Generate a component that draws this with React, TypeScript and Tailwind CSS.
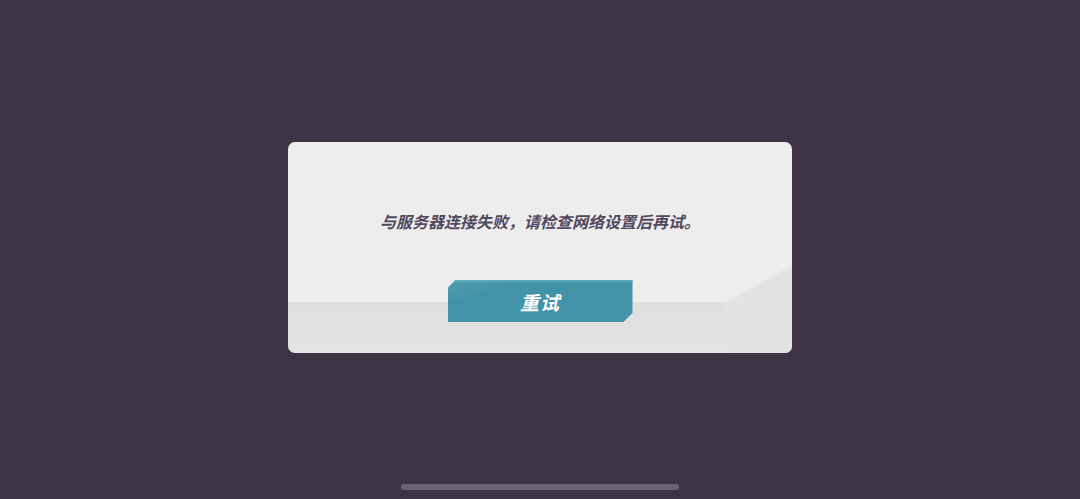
export default function App() {
  return (
    <div
      className="flex h-[499px] w-[1080px] flex-col items-center bg-[#3c3444]"
      style={{ fontFamily: '"Noto Sans CJK SC", "Noto Sans", sans-serif' }}
    >
      {/* Dialog card */}
      <div className="relative mt-[142px] flex h-[211px] w-[504px] flex-col items-center overflow-hidden rounded-[7px] bg-[linear-gradient(to_bottom,#eeeded_0,#eeeded_160px,#e0dfe0_160px,#e4e3e4_100%)]">
        {/* right-side diagonal sheen */}
        <svg className="absolute right-0 top-[123px]" width="66" height="88" viewBox="0 0 66 88">
          <polygon points="0,37 66,0 66,88 0,88" fill="#e3e2e3" />
          <polygon points="0,37 66,0 66,3 0,39" fill="#e7e6e7" />
        </svg>

        <p className="relative mt-[67px] text-[16px] font-bold italic leading-6 tracking-[0px] text-[#514a5e]">
          与服务器连接失败，请检查网络设置后再试。
        </p>

        <button className="relative mt-[47px] flex h-[42px] w-[185px] items-center justify-center bg-[#4393a8] [clip-path:polygon(8px_0,100%_0,100%_calc(100%-9px),calc(100%-9px)_100%,0_100%,0_8px)]">
          <span className="absolute inset-x-0 top-0 h-[2px] bg-[#5aa7ba]" />
          <span className="absolute left-0 top-0 h-[20px] w-[70px] bg-[linear-gradient(160deg,rgba(255,255,255,0.08)_0,rgba(255,255,255,0)_60%)]" />
          <span className="relative text-[19px] font-bold italic leading-none tracking-[1px] text-white">
            重试
          </span>
        </button>
      </div>

      {/* Home indicator */}
      <div className="mb-[9px] mt-auto h-[6px] w-[278px] rounded-full bg-[#6b6275]" />
    </div>
  );
}
